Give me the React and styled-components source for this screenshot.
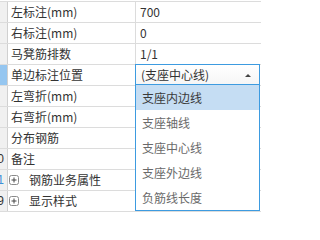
import React from "react";
import styled, { createGlobalStyle } from "styled-components";

const Global = createGlobalStyle`
  *, *::before, *::after { box-sizing: border-box; }
  html, body { margin: 0; padding: 0; background: #fff; overflow: hidden; }
  body { font-family: "Noto Sans CJK SC", "Microsoft YaHei", sans-serif; }
`;

const Grid = styled.div`
  margin-top: 1px;
  border-top: 1px solid #dcdcdc;
  width: 261px;
`;

const Row = styled.div`
  display: flex;
  height: 21px;
  border-bottom: 1px solid #dcdcdc;
  font-size: 12px;
  color: #333;
  line-height: 20px;
`;

const Strip = styled.div`
  width: 8px;
  flex: none;
  border-right: 1px solid #d0d0d0;
  background: ${(p) => (p.$selected ? "#95c6f0" : "#f0f0f0")};
  overflow: hidden;
  display: flex;
  justify-content: flex-end;
  font-family: "Liberation Sans", sans-serif;
  font-size: 12px;
  color: ${(p) => p.$numColor || "#333"};
`;

const Num = styled.span`
  white-space: nowrap;
  margin-right: 3px;
`;

const Label = styled.div`
  width: 128px;
  flex: none;
  padding-left: 3px;
  border-right: 1px solid #dcdcdc;
  display: flex;
  align-items: center;
  gap: 10px;
  white-space: nowrap;
  overflow: hidden;
`;

const Value = styled.div`
  flex: 1;
  padding-left: 4px;
  position: relative;
  white-space: nowrap;
`;

const Combo = styled.div`
  position: absolute;
  left: -1px;
  top: -1px;
  width: 125px;
  height: 21px;
  border: 1px solid #3d9be0;
  background: linear-gradient(#ffffff, #f6f6f6);
  display: flex;
  align-items: center;
  justify-content: space-between;
  padding: 0 8px 0 5px;
  z-index: 2;
`;

const ComboText = styled.span`
  color: #333;
`;

const Dropdown = styled.div`
  position: absolute;
  left: -1px;
  top: 19px;
  width: 125px;
  border: 1px solid #3d9be0;
  background: #fff;
`;

const Item = styled.div`
  height: 25px;
  line-height: 25px;
  padding-left: 6px;
  color: ${(p) => (p.$active ? "#3a3a3a" : "#6a6a6a")};
  background: ${(p) => (p.$active ? "#c5ddf3" : "transparent")};
`;

const PlusBox = () => (
  <svg width="10" height="10" viewBox="0 0 10 10" style={{ flex: "none", marginLeft: "-2px" }}>
    <rect x="0.5" y="0.5" width="9" height="9" rx="2" fill="#fff" stroke="#8a8a8a" />
    <path d="M2.5 5H7.5M5 2.5V7.5" stroke="#444" strokeWidth="1" />
  </svg>
);

const Arrow = () => (
  <svg width="6" height="4" viewBox="0 0 6 4">
    <path d="M0 4L3 1L6 4Z" fill="#444" />
  </svg>
);

const rows = [
  { label: "左标注(mm)", value: "700" },
  { label: "右标注(mm)", value: "0" },
  { label: "马凳筋排数", value: "1/1" },
  { label: "单边标注位置", combo: true, selected: true },
  { label: "左弯折(mm)", value: "" },
  { label: "右弯折(mm)", value: "" },
  { label: "分布钢筋", value: "" },
  { label: "备注", value: "", num: "10" },
  { label: "钢筋业务属性", plus: true, num: "11", numColor: "#3d8fd8" },
  { label: "显示样式", plus: true, num: "19" },
];

const options = ["支座内边线", "支座轴线", "支座中心线", "支座外边线", "负筋线长度"];

export default function App() {
  return (
    <>
      <Global />
      <Grid>
        {rows.map((r, i) => (
          <Row key={i}>
            <Strip $selected={r.selected} $numColor={r.numColor}>
              {r.num && <Num>{r.num}</Num>}
            </Strip>
            <Label>
              {r.plus && <PlusBox />}
              <span>{r.label}</span>
            </Label>
            <Value>
              {r.combo ? (
                <Combo>
                  <ComboText>(支座中心线)</ComboText>
                  <Arrow />
                  <Dropdown>
                    {options.map((o, j) => (
                      <Item key={o} $active={j === 0}>{o}</Item>
                    ))}
                  </Dropdown>
                </Combo>
              ) : (
                r.value
              )}
            </Value>
          </Row>
        ))}
      </Grid>
    </>
  );
}
